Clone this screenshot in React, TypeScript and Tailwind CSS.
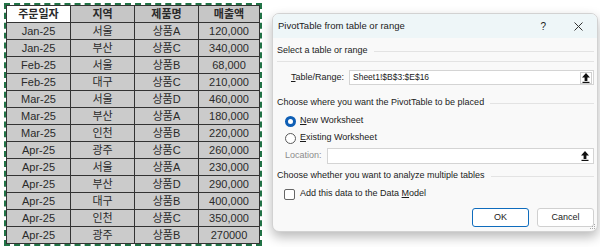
const rows = [
  ['Jan-25', '서울', '상품A', '120,000'],
  ['Jan-25', '부산', '상품C', '340,000'],
  ['Feb-25', '서울', '상품B', '68,000'],
  ['Feb-25', '대구', '상품C', '210,000'],
  ['Mar-25', '서울', '상품D', '460,000'],
  ['Mar-25', '부산', '상품A', '180,000'],
  ['Mar-25', '인천', '상품B', '220,000'],
  ['Apr-25', '광주', '상품C', '260,000'],
  ['Apr-25', '서울', '상품A', '230,000'],
  ['Apr-25', '부산', '상품D', '290,000'],
  ['Apr-25', '대구', '상품B', '400,000'],
  ['Apr-25', '인천', '상품C', '350,000'],
  ['Apr-25', '광주', '상품B', '270000'],
]

const headers = ['주문일자', '지역', '제품명', '매출액']

function UpArrow() {
  return (
    <svg width="8" height="10" viewBox="0 0 8 10">
      <path d="M4 0 L8 4.5 L5.4 4.5 L5.4 8 L2.6 8 L2.6 4.5 L0 4.5 Z" fill="#111" />
      <rect x="0.5" y="8.8" width="7" height="1.2" fill="#111" />
    </svg>
  )
}

function SectionTitle({ text }: { text: string }) {
  return (
    <div className="flex h-[14px] items-center gap-[6px]">
      <span className="whitespace-nowrap">{text}</span>
      <div className="h-px flex-1 bg-[#e3e3e3]" />
    </div>
  )
}

export default function App() {
  return (
    <div className="flex h-[247px] w-[600px] items-start overflow-hidden bg-white">
      {/* copied range on the sheet */}
      <div className="ml-[4px] mt-[3px] border-2 border-dashed border-[#217346] bg-white">
        <div className="grid grid-cols-[64px_64px_64px_61px] border-l border-t border-[#333] text-[11px] text-[#2a2a2a] font-['Liberation_Sans','Noto_Sans_CJK_KR',sans-serif]">
          {headers.map((h, i) => (
            <div
              key={h}
              className={`flex h-[17px] items-center justify-center border-b border-r border-[#333] font-bold ${i === 0 ? 'bg-white' : 'bg-[#c6c6c6]'}`}
            >
              {h}
            </div>
          ))}
          {rows.map((r, ri) =>
            r.map((c, ci) => (
              <div
                key={ri + '-' + ci}
                className="flex h-[17px] items-center justify-center border-b border-r border-[#333] bg-[#cbcbcb]"
              >
                {c}
              </div>
            ))
          )}
        </div>
      </div>

      {/* PivotTable dialog */}
      <div className="relative ml-[10px] mt-[13px] flex h-[219px] w-[326px] flex-col overflow-hidden rounded-[7px] border border-[#d2d2d2] bg-[#f9f9f9] text-[9px] text-[#1b1b1b] shadow-[0_5px_12px_rgba(0,0,0,0.28)] font-['Liberation_Sans',Arial,sans-serif]">
        <div className="flex h-[24px] shrink-0 items-center bg-[#eef6f8] pl-[5px] pr-[14px] text-[9.5px]">
          <span className="flex-1">PivotTable from table or range</span>
          <span className="mr-[28px] text-[10px]">?</span>
          <svg width="9" height="9" viewBox="0 0 9 9">
            <path d="M0.5 0.5 L8.5 8.5 M8.5 0.5 L0.5 8.5" stroke="#333" strokeWidth="1" />
          </svg>
        </div>

        <div className="flex flex-1 flex-col pl-[4px] pr-[3px]">
          <div className="mt-[6px]">
            <SectionTitle text="Select a table or range" />
          </div>
          <div className="mt-[3px] h-px bg-[#e3e3e3]" />
          <div className="mt-[8px] flex h-[15px] items-center pl-[14px]">
            <span className="w-[58px]">
              <span className="underline">T</span>able/Range:
            </span>
            <div className="flex h-[15px] flex-1 items-center border border-[#d4d4d4] bg-white pl-[3px]">
              <span className="flex-1 text-[8.5px]">Sheet1!$B$3:$E$16</span>
              <div className="mr-[1px] flex h-[12px] w-[12px] items-center justify-center border border-[#cfcfcf] bg-white">
                <UpArrow />
              </div>
            </div>
          </div>

          <div className="mt-[11px]">
            <SectionTitle text="Choose where you want the PivotTable to be placed" />
          </div>
          <div className="mt-[4px] flex h-[14px] items-center gap-[4px] pl-[8px]">
            <span className="h-[11px] w-[11px] rounded-full border-[3.5px] border-[#0f5fb5] bg-white" />
            <span>
              <span className="underline">N</span>ew Worksheet
            </span>
          </div>
          <div className="mt-[3px] flex h-[14px] items-center gap-[4px] pl-[8px]">
            <span className="h-[11px] w-[11px] rounded-full border border-[#5a5a5a] bg-white" />
            <span>
              <span className="underline">E</span>xisting Worksheet
            </span>
          </div>
          <div className="mt-[3px] flex h-[16px] items-center pl-[8px]">
            <span className="w-[42px] text-[#8c8c8c]">Location:</span>
            <div className="flex h-[16px] flex-1 items-center justify-end border border-[#d4d4d4] bg-white">
              <div className="mr-[2px] flex h-[12px] w-[12px] items-center justify-center">
                <UpArrow />
              </div>
            </div>
          </div>

          <div className="mt-[5px]">
            <SectionTitle text="Choose whether you want to analyze multiple tables" />
          </div>
          <div className="mt-[4px] flex h-[14px] items-center gap-[5px] pl-[7px]">
            <span className="h-[11px] w-[11px] rounded-[2px] border border-[#666] bg-white" />
            <span>
              Add this data to the Data <span className="underline">M</span>odel
            </span>
          </div>

          <div className="mt-[7px] flex justify-end gap-[8px]">
            <button className="flex h-[19px] w-[57px] items-center justify-center rounded-[3px] border border-[#0f6cbd] bg-white text-[9px]">
              OK
            </button>
            <button className="flex h-[19px] w-[57px] items-center justify-center rounded-[3px] border border-[#d0d0d0] bg-white text-[9px]">
              Cancel
            </button>
          </div>
        </div>

        {/* resize grip */}
        <svg className="absolute bottom-[1px] right-[1px]" width="6" height="6" viewBox="0 0 6 6">
          <rect x="4" y="0" width="1" height="1" fill="#a8a8a8" />
          <rect x="2" y="2" width="1" height="1" fill="#a8a8a8" />
          <rect x="4" y="2" width="1" height="1" fill="#a8a8a8" />
          <rect x="0" y="4" width="1" height="1" fill="#a8a8a8" />
          <rect x="2" y="4" width="1" height="1" fill="#a8a8a8" />
          <rect x="4" y="4" width="1" height="1" fill="#a8a8a8" />
        </svg>
      </div>
    </div>
  )
}
